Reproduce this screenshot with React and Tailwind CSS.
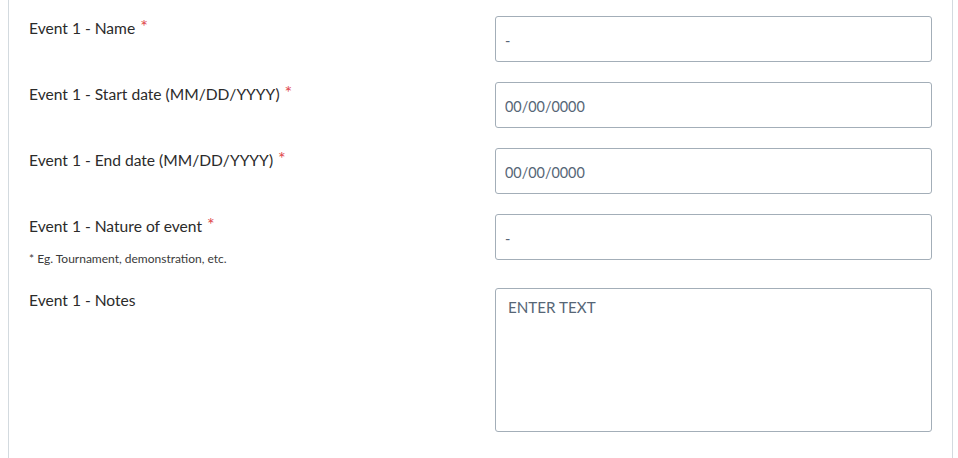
import React from 'react';

const rows = [
  { label: 'Event 1 - Name', required: true, placeholder: '-' },
  { label: 'Event 1 - Start date (MM/DD/YYYY)', required: true, placeholder: '00/00/0000' },
  { label: 'Event 1 - End date (MM/DD/YYYY)', required: true, placeholder: '00/00/0000' },
  {
    label: 'Event 1 - Nature of event',
    required: true,
    placeholder: '-',
    hint: '* Eg. Tournament, demonstration, etc.',
  },
];

function Label({ label, required, hint }) {
  return (
    <div className="w-[466px] shrink-0 pt-px">
      <div className="text-[15.6px] leading-[22px] text-[#2b2b2b]">
        {label}
        {required && <span className="ml-[5px] relative -top-px text-[18px] leading-none text-[#e0474c]">*</span>}
      </div>
      {hint && <div className="mt-[14px] text-[12px] leading-4 text-[#3a3a3a]">{hint}</div>}
    </div>
  );
}

export default function App() {
  return (
    <div className="min-h-[458px] bg-white" style={{ fontFamily: 'Lato, "Open Sans", sans-serif' }}>
      <div className="ml-2 w-[945px] min-h-[458px] border-x border-[#d3dadf] px-5 pt-4">
        <div className="flex flex-col gap-5">
          {rows.map((r) => (
            <div key={r.label} className="flex">
              <Label label={r.label} required={r.required} hint={r.hint} />
              <input
                className="h-[46px] w-[437px] rounded-[3px] border border-[#a3aeb8] px-[9px] pt-[2px] text-[14.4px] text-[#4f5f6f] placeholder:text-[#566676] outline-none"
                placeholder={r.placeholder}
              />
            </div>
          ))}
          <div className="mt-px flex">
            <Label label="Event 1 - Notes" />
            <textarea
              className="h-[144px] w-[437px] resize-none rounded-[3px] border border-[#a3aeb8] px-3 pt-[7px] text-[15.2px] text-[#4f5f6f] placeholder:text-[#566676] outline-none"
              placeholder="ENTER TEXT"
            />
          </div>
        </div>
      </div>
    </div>
  );
}
